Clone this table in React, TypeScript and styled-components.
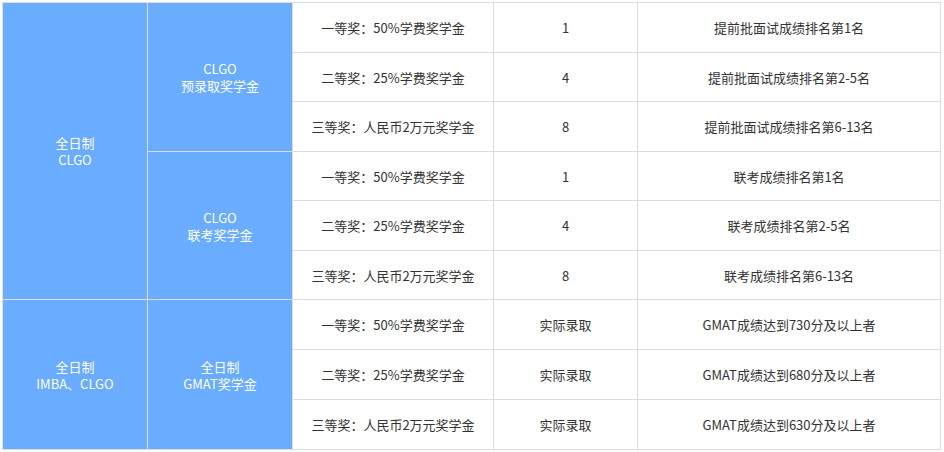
import React from "react";
import styled, { createGlobalStyle } from "styled-components";

const GlobalStyle = createGlobalStyle`
  html, body { margin: 0; padding: 0; background: #ffffff; }
  body { font-family: "Noto Sans CJK SC", "Noto Sans", sans-serif; }
`;

const Page = styled.div`
  padding: 2px 0 0 2px;
`;

const Grid = styled.div`
  display: grid;
  width: 939px;
  box-sizing: border-box;
  grid-template-columns: 144px 144px 200px 143px 302px;
  grid-template-rows: 49px 48px 49px 48px 49px 48px 49px 49px 49px;
  gap: 1px;
  padding: 1px;
  background: #dddddd;
`;

const Cell = styled.div<{ $blue?: boolean; $rows?: number; $col?: number; $row?: number }>`
  display: flex;
  align-items: center;
  justify-content: center;
  text-align: center;
  font-size: 13px;
  line-height: 17px;
  background: ${(p) => (p.$blue ? "#6aacff" : "#ffffff")};
  color: ${(p) => (p.$blue ? "#ffffff" : "#333333")};
  grid-row: ${(p) => (p.$row ? `${p.$row} / span ${p.$rows ?? 1}` : "auto")};
  grid-column: ${(p) => (p.$col ? `${p.$col}` : "auto")};
`;

const Lines = styled.div`
  display: flex;
  flex-direction: column;
`;

type Row = { prize: string; count: string; rule: string };

const groups: { sub: string[]; rows: Row[] }[] = [
  {
    sub: ["CLGO", "预录取奖学金"],
    rows: [
      { prize: "一等奖：50%学费奖学金", count: "1", rule: "提前批面试成绩排名第1名" },
      { prize: "二等奖：25%学费奖学金", count: "4", rule: "提前批面试成绩排名第2-5名" },
      { prize: "三等奖：人民币2万元奖学金", count: "8", rule: "提前批面试成绩排名第6-13名" },
    ],
  },
  {
    sub: ["CLGO", "联考奖学金"],
    rows: [
      { prize: "一等奖：50%学费奖学金", count: "1", rule: "联考成绩排名第1名" },
      { prize: "二等奖：25%学费奖学金", count: "4", rule: "联考成绩排名第2-5名" },
      { prize: "三等奖：人民币2万元奖学金", count: "8", rule: "联考成绩排名第6-13名" },
    ],
  },
  {
    sub: ["全日制", "GMAT奖学金"],
    rows: [
      { prize: "一等奖：50%学费奖学金", count: "实际录取", rule: "GMAT成绩达到730分及以上者" },
      { prize: "二等奖：25%学费奖学金", count: "实际录取", rule: "GMAT成绩达到680分及以上者" },
      { prize: "三等奖：人民币2万元奖学金", count: "实际录取", rule: "GMAT成绩达到630分及以上者" },
    ],
  },
];

const programs = [
  { lines: ["全日制", "CLGO"], row: 1, rows: 6 },
  { lines: ["全日制", "IMBA、CLGO"], row: 7, rows: 3 },
];

export default function App() {
  return (
    <>
      <GlobalStyle />
      <Page>
        <Grid>
          {programs.map((p) => (
            <Cell key={p.row} $blue $col={1} $row={p.row} $rows={p.rows}>
              <Lines>
                {p.lines.map((l) => (
                  <span key={l}>{l}</span>
                ))}
              </Lines>
            </Cell>
          ))}
          {groups.map((g, gi) => (
            <React.Fragment key={gi}>
              <Cell $blue $col={2} $row={gi * 3 + 1} $rows={3}>
                <Lines>
                  {g.sub.map((l) => (
                    <span key={l}>{l}</span>
                  ))}
                </Lines>
              </Cell>
              {g.rows.map((r, ri) => (
                <React.Fragment key={ri}>
                  <Cell $col={3} $row={gi * 3 + ri + 1}>{r.prize}</Cell>
                  <Cell $col={4} $row={gi * 3 + ri + 1}>{r.count}</Cell>
                  <Cell $col={5} $row={gi * 3 + ri + 1}>{r.rule}</Cell>
                </React.Fragment>
              ))}
            </React.Fragment>
          ))}
        </Grid>
      </Page>
    </>
  );
}
